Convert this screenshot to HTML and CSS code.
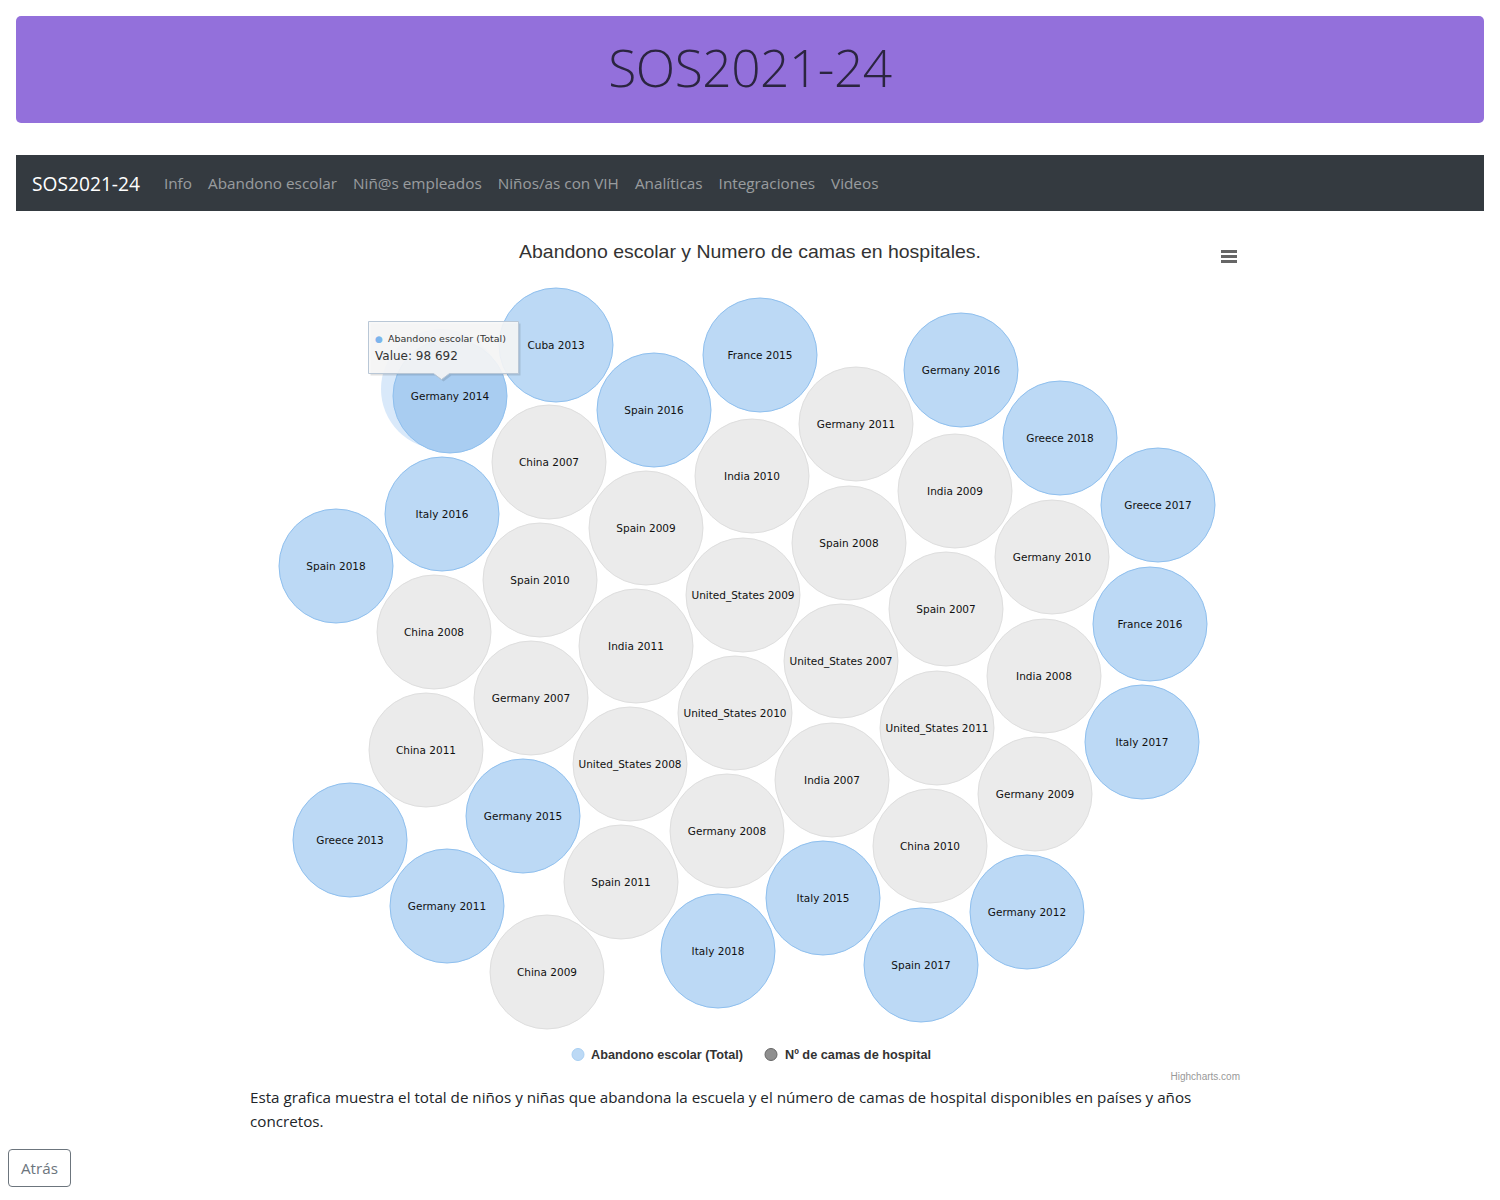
FILE: index.html
```html
<!DOCTYPE html>
<html lang="es">
<head>
<meta charset="utf-8">
<title>SOS2021-24</title>
<link rel="stylesheet" href="styles.css">
</head>
<body>
<header class="jumbo"><h1 class="jumbo-title">SOS2021-24</h1></header>
<nav class="navbar">
  <a class="brand" href="#">SOS2021-24</a>
  <a class="nav-link" href="#">Info</a>
  <a class="nav-link" href="#">Abandono escolar</a>
  <a class="nav-link" href="#">Niñ@s empleados</a>
  <a class="nav-link" href="#">Niños/as con VIH</a>
  <a class="nav-link" href="#">Analíticas</a>
  <a class="nav-link" href="#">Integraciones</a>
  <a class="nav-link" href="#">Videos</a>
</nav>
<main class="chart-wrap">
<svg class="chart" width="1000" height="858" viewBox="250 227 1000 858" xmlns="http://www.w3.org/2000/svg">
  <text class="c-title" x="519" y="258" textLength="462" lengthAdjust="spacingAndGlyphs">Abandono escolar y Numero de camas en hospitales.</text>
  <g class="menu">
    <rect x="1221" y="250" width="16" height="3"/>
    <rect x="1221" y="255" width="16" height="3"/>
    <rect x="1221" y="260" width="16" height="3"/>
  </g>
  <g class="gray">
    <circle cx="549" cy="462" r="57"/><circle cx="856" cy="424" r="57"/><circle cx="752" cy="476" r="57"/>
    <circle cx="955" cy="491" r="57"/><circle cx="646" cy="528" r="57"/><circle cx="849" cy="543" r="57"/>
    <circle cx="1052" cy="557" r="57"/><circle cx="540" cy="580" r="57"/><circle cx="743" cy="595" r="57"/>
    <circle cx="946" cy="609" r="57"/><circle cx="434" cy="632" r="57"/><circle cx="636" cy="646" r="57"/>
    <circle cx="841" cy="661" r="57"/><circle cx="1044" cy="676" r="57"/><circle cx="531" cy="698" r="57"/>
    <circle cx="735" cy="713" r="57"/><circle cx="937" cy="728" r="57"/><circle cx="426" cy="750" r="57"/>
    <circle cx="630" cy="764" r="57"/><circle cx="832" cy="780" r="57"/><circle cx="1035" cy="794" r="57"/>
    <circle cx="727" cy="831" r="57"/><circle cx="930" cy="846" r="57"/><circle cx="621" cy="882" r="57"/>
    <circle cx="547" cy="972" r="57"/>
  </g>
  <g class="blue">
    <circle cx="556" cy="345" r="57"/><circle cx="760" cy="355" r="57"/><circle cx="654" cy="410" r="57"/>
    <circle cx="961" cy="370" r="57"/><circle cx="1060" cy="438" r="57"/><circle cx="1158" cy="505" r="57"/>
    <circle cx="442" cy="514" r="57"/><circle cx="336" cy="566" r="57"/><circle cx="1150" cy="624" r="57"/>
    <circle cx="1142" cy="742" r="57"/><circle cx="350" cy="840" r="57"/><circle cx="523" cy="816" r="57"/>
    <circle cx="447" cy="906" r="57"/><circle cx="823" cy="898" r="57"/><circle cx="718" cy="951" r="57"/>
    <circle cx="921" cy="965" r="57"/><circle cx="1027" cy="912" r="57"/>
  </g>
  <circle class="halo" cx="441" cy="389" r="60"/>
  <circle class="hover" cx="450" cy="396" r="57"/>
  <g class="labels" text-anchor="middle">
    <text x="549" y="466">China 2007</text><text x="856" y="428">Germany 2011</text><text x="752" y="480">India 2010</text>
    <text x="955" y="495">India 2009</text><text x="646" y="532">Spain 2009</text><text x="849" y="547">Spain 2008</text>
    <text x="1052" y="561">Germany 2010</text><text x="540" y="584">Spain 2010</text><text x="743" y="599">United_States 2009</text>
    <text x="946" y="613">Spain 2007</text><text x="434" y="636">China 2008</text><text x="636" y="650">India 2011</text>
    <text x="841" y="665">United_States 2007</text><text x="1044" y="680">India 2008</text><text x="531" y="702">Germany 2007</text>
    <text x="735" y="717">United_States 2010</text><text x="937" y="732">United_States 2011</text><text x="426" y="754">China 2011</text>
    <text x="630" y="768">United_States 2008</text><text x="832" y="784">India 2007</text><text x="1035" y="798">Germany 2009</text>
    <text x="727" y="835">Germany 2008</text><text x="930" y="850">China 2010</text><text x="621" y="886">Spain 2011</text>
    <text x="547" y="976">China 2009</text>
    <text x="556" y="349">Cuba 2013</text><text x="760" y="359">France 2015</text><text x="654" y="414">Spain 2016</text>
    <text x="961" y="374">Germany 2016</text><text x="1060" y="442">Greece 2018</text><text x="1158" y="509">Greece 2017</text>
    <text x="442" y="518">Italy 2016</text><text x="336" y="570">Spain 2018</text><text x="1150" y="628">France 2016</text>
    <text x="1142" y="746">Italy 2017</text><text x="350" y="844">Greece 2013</text><text x="523" y="820">Germany 2015</text>
    <text x="447" y="910">Germany 2011</text><text x="823" y="902">Italy 2015</text><text x="718" y="955">Italy 2018</text>
    <text x="921" y="969">Spain 2017</text><text x="1027" y="916">Germany 2012</text>
    <text x="450" y="400">Germany 2014</text>
  </g>
  <g class="legend">
    <circle class="lg-blue" cx="578" cy="1054.5" r="6"/>
    <text x="591" y="1059" textLength="152" lengthAdjust="spacingAndGlyphs">Abandono escolar (Total)</text>
    <circle class="lg-gray" cx="771" cy="1054.5" r="6"/>
    <text x="785" y="1059" textLength="146" lengthAdjust="spacingAndGlyphs">Nº de camas de hospital</text>
  </g>
  <text class="credits" x="1240" y="1080" text-anchor="end">Highcharts.com</text>
  <g class="tooltip">
    <path class="tt-shadow" d="M370.5 323.5 h150 v52 h-69 l-8 6 l-8 -6 h-65 z"/>
    <path class="tt-box" d="M368.5 321.5 h150 v52 h-69 l-8 6 l-8 -6 h-65 z"/>
    <text class="tt-dot" x="375" y="342">●</text>
    <text class="tt-series" x="388" y="342">Abandono escolar (Total)</text>
    <text class="tt-value" x="375" y="360">Value: 98 692</text>
  </g>
</svg>
</main>
<p class="desc">Esta grafica muestra el total de niños y niñas que abandona la escuela y el número de camas de hospital disponibles en países y años concretos.</p>
<button class="btn-back" type="button">Atrás</button>
</body>
</html>
```
FILE: styles.css
```css
body {
  margin: 8px;
  font-family: "Open Sans", "Noto Sans", sans-serif;
  color: #212529;
  background: #fff;
}
.jumbo {
  margin: 8px 8px 32px;
  height: 107px;
  background: #9370db;
  border-radius: 5px;
  display: flex;
  align-items: center;
  justify-content: center;
}
.jumbo-title {
  margin: -5px 0 0;
  font-weight: 300;
  font-size: 51.5px;
  color: #2b2540;
  letter-spacing: -0.5px;
}
.navbar {
  margin: 0 8px;
  height: 56px;
  background: #343a40;
  display: flex;
  align-items: center;
  padding: 0 16px;
  box-sizing: border-box;
}
.brand {
  color: #fff;
  font-size: 19.2px;
  text-decoration: none;
  margin-right: 16px;
}
.nav-link {
  color: rgba(255, 255, 255, 0.5);
  font-size: 15.3px;
  text-decoration: none;
  padding: 0 8px;
}
.chart-wrap {
  width: 1000px;
  margin: 16px auto 0;
}
.chart {
  display: block;
  font-family: "DejaVu Sans", Verdana, sans-serif;
}
.c-title {
  font-family: "Liberation Sans", Arial, sans-serif;
  font-size: 18.5px;
  fill: #333;
}
.menu rect { fill: #666; }
.gray circle { fill: #ebebeb; stroke: #dedede; stroke-width: 1; }
.blue circle { fill: #bcd9f5; stroke: #8ebfee; stroke-width: 1; }
.halo { fill: #d9e9fa; }
.hover { fill: #a9cdf1; stroke: #8ebfee; stroke-width: 1; }
.labels text { font-size: 10.5px; fill: #111; }
.legend text {
  font-family: "Liberation Sans", Arial, sans-serif;
  font-size: 12px;
  font-weight: bold;
  fill: #333;
}
.lg-blue { fill: #bcd9f5; stroke: #a8cff3; }
.lg-gray { fill: #8f8f8f; stroke: #666; }
.credits {
  font-family: "Liberation Sans", Arial, sans-serif;
  font-size: 10px;
  fill: #999;
}
.tt-shadow { fill: rgba(0, 0, 0, 0.12); stroke: none; }
.tt-box { fill: rgba(247, 247, 247, 0.9); stroke: #b9c7d6; stroke-width: 1; }
.tt-dot { font-size: 9px; fill: #7cb5ec; }
.tt-series { font-size: 9.5px; fill: #333; }
.tt-value { font-size: 12px; fill: #333; }
.desc {
  width: 1000px;
  margin: 0 auto 16px;
  font-size: 15.2px;
  line-height: 24px;
}
.btn-back {
  display: block;
  height: 38px;
  padding: 0 12px;
  font-family: "Open Sans", "Noto Sans", sans-serif;
  font-size: 15.2px;
  color: #6c757d;
  background: #fff;
  border: 1px solid #6c757d;
  border-radius: 4px;
}
```
